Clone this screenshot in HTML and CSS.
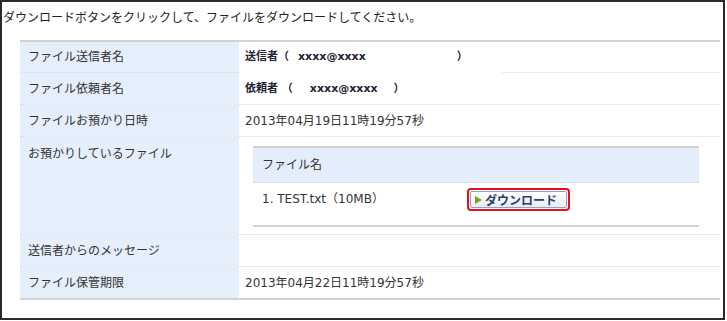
FILE: index.html
```html
<!DOCTYPE html>
<html lang="ja">
<head>
    <meta charset="UTF-8" />
    <title>ファイルのダウンロード</title>
    <link rel="stylesheet" href="styles.css">
</head>
<body>
<div class="frame">
    <p class="lead">ダウンロードボタンをクリックして、ファイルをダウンロードしてください。</p>

    <div class="info">
        <div class="row row-sender">
            <div class="label">ファイル送信者名</div>
            <div class="value person">
                <span>送信者（</span><span class="addr addr-sender">xxxx@xxxx</span><span class="close close-sender">）</span>
            </div>
        </div>
        <div class="row">
            <div class="label">ファイル依頼者名</div>
            <div class="value person">
                <span>依頼者 （</span><span class="addr addr-client">xxxx@xxxx</span><span class="close close-client">）</span>
            </div>
        </div>
        <div class="row">
            <div class="label">ファイルお預かり日時</div>
            <div class="value">2013年04月19日11時19分57秒</div>
        </div>
        <div class="row row-files">
            <div class="label">お預かりしているファイル</div>
            <div class="value">
                <div class="files">
                    <div class="files-head">ファイル名</div>
                    <div class="file-item">
                        <span class="file-name">1. TEST.txt（10MB）</span>
                        <span class="btn-ring">
                            <button class="btn-download"><span class="arrow"></span>ダウンロード</button>
                        </span>
                    </div>
                </div>
            </div>
        </div>
        <div class="row">
            <div class="label">送信者からのメッセージ</div>
            <div class="value"></div>
        </div>
        <div class="row row-last">
            <div class="label">ファイル保管期限</div>
            <div class="value">2013年04月22日11時19分57秒</div>
        </div>
    </div>
</div>
</body>
</html>
```

FILE: styles.css
```css
body {
    margin: 0;
    font-family: "DejaVu Sans", "Noto Sans CJK JP", sans-serif;
    font-size: 12px;
    line-height: 16px;
    color: #333;
    background-color: #fff;
}

.frame {
    box-sizing: border-box;
    width: 725px;
    height: 320px;
    border: 2px solid #2a2a2a;
}

.lead {
    margin: 0;
    padding: 8px 0 0 1px;
    color: #222;
}

/* Tabla de datos */
.info {
    width: 700px;
    margin: 14px 0 0 18px;
    border-top: 2px solid #d3d3d3;
}

.row {
    display: flex;
    border-bottom: 1px dotted #d6d6d6;
}

.row-sender {
    border-bottom: none;
}

.row-sender .label {
    border-bottom: 1px dotted #d6d6d6;
}

.row-sender .value {
    padding-bottom: 1px;
    background-image: repeating-linear-gradient(to right, #d6d6d6 0 1px, transparent 1px 2px);
    background-size: 218px 1px;
    background-position: right bottom;
    background-repeat: no-repeat;
}

.row-last {
    border-bottom: 2px solid #d3d3d3;
}

.label {
    box-sizing: border-box;
    width: 219px;
    height: 31px;
    padding-left: 8px;
    display: flex;
    align-items: center;
    background-color: #e5eefb;
}

.value {
    flex: 1;
    padding-left: 6px;
    display: flex;
    align-items: center;
}

.person {
    font-weight: bold;
    color: #1f2233;
    font-size: 11px;
}

.addr-sender { margin-left: 9px; }
.close-sender { margin-left: 91px; }
.addr-client { margin-left: 17px; }
.close-client { margin-left: 16px; }

.row-files .label {
    height: auto;
    min-height: 97px;
    align-items: flex-start;
    padding-top: 9px;
}

.row-files .value {
    padding: 9px 0 7px 14px;
    align-items: flex-start;
}

.files {
    width: 446px;
    border-top: 2px solid #d3d3d3;
    border-bottom: 2px solid #d3d3d3;
}

.files-head {
    height: 34px;
    padding-left: 9px;
    display: flex;
    align-items: center;
    background-color: #e3edfb;
    border-bottom: 1px dotted #d6d6d6;
}

.file-item {
    height: 42px;
    padding: 5px 0 0 9px;
    box-sizing: border-box;
    display: flex;
    align-items: flex-start;
}

.file-name {
    width: 205px;
    padding-top: 3px;
}

.btn-ring {
    display: inline-block;
    padding: 1px;
    border: 2px solid #e8101a;
    border-radius: 4px;
}

.btn-download {
    display: flex;
    align-items: center;
    width: 97px;
    height: 17px;
    padding: 0 0 0 4px;
    border: 1px solid #8ea2bd;
    border-radius: 2px;
    background: linear-gradient(#ffffff, #e6edf5);
    font-family: "Noto Sans CJK JP", sans-serif;
    font-size: 12px;
    font-weight: bold;
    color: #2c3f6b;
    cursor: pointer;
}

.arrow {
    width: 0;
    height: 0;
    margin-right: 3px;
    border-top: 4px solid transparent;
    border-bottom: 4px solid transparent;
    border-left: 7px solid #79a51d;
}
```
